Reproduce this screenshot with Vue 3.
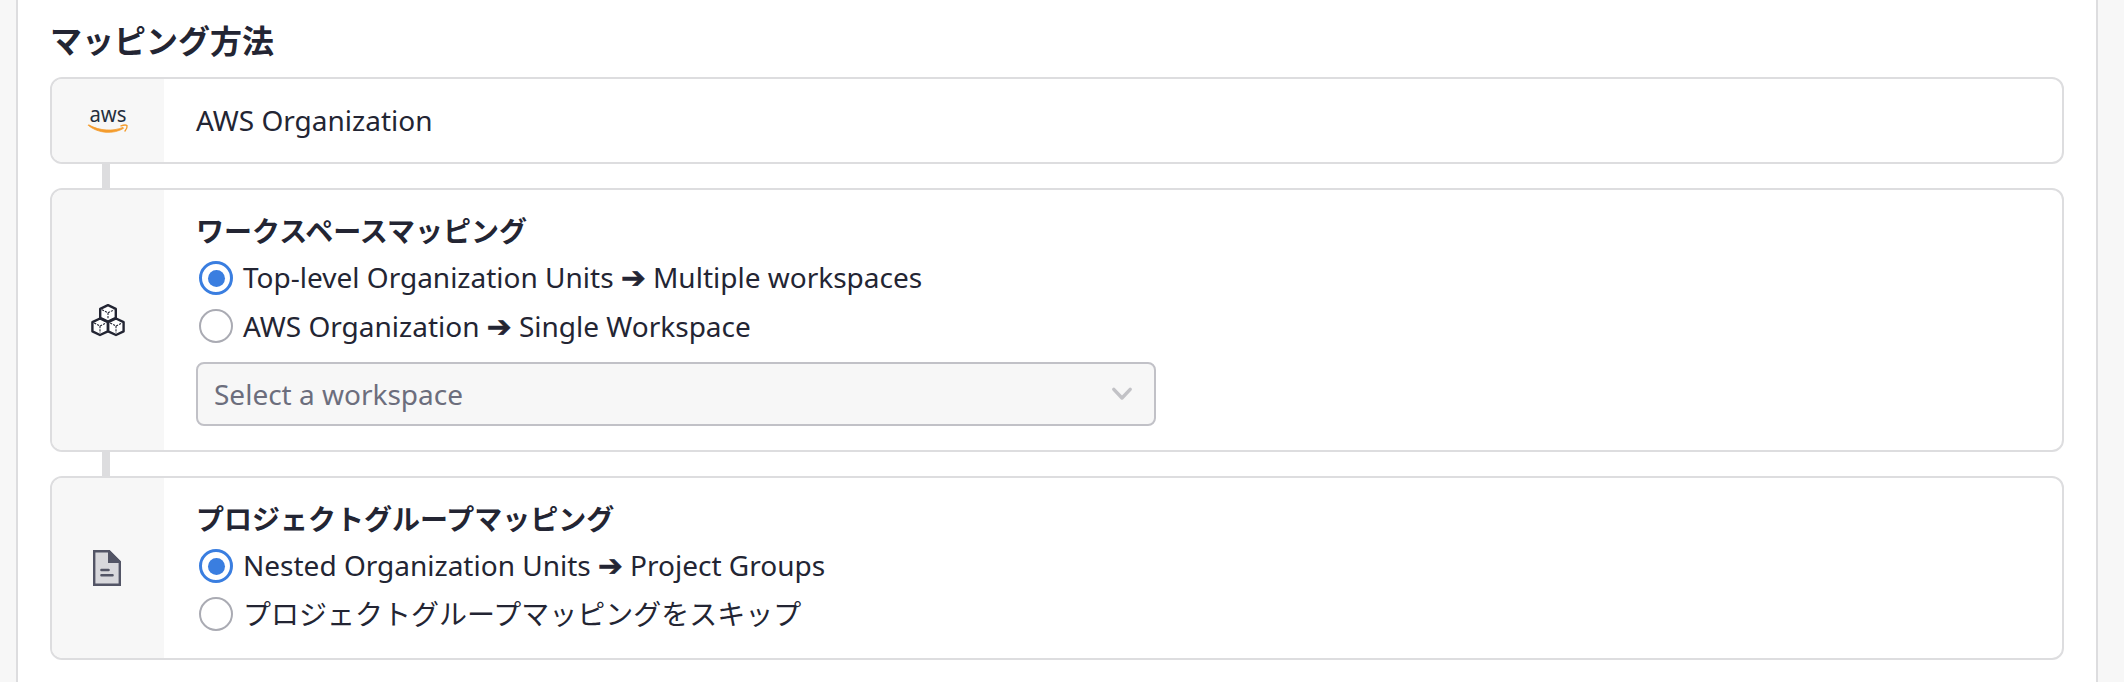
<script setup>
const workspaceOptions = [
  { before: 'Top-level Organization Units', after: 'Multiple workspaces', selected: true },
  { before: 'AWS Organization', after: 'Single Workspace', selected: false },
]
const projectOptions = [
  { before: 'Nested Organization Units', after: 'Project Groups', selected: true },
  { before: 'プロジェクトグループマッピングをスキップ', selected: false },
]
</script>

<template>
  <main class="page">
    <section class="panel">
      <h2 class="heading">マッピング方法</h2>

      <div class="card source">
        <div class="side">
          <svg class="aws" width="52" height="56" viewBox="-4 -12 52 56">
            <text x="3.4" y="16.8" textLength="37" lengthAdjust="spacingAndGlyphs">aws</text>
            <path d="M2.2 20.3C12 28.8 28 29.4 37.6 23.3L37 22.4C27 26.4 14 26.2 2.6 19.8Z" fill="#f49c2d" stroke="#f49c2d" stroke-width="0.8" stroke-linejoin="round" />
            <path d="M35 20.9C37.5 20 40 19.9 41 20.5C41.3 22 40.5 24.4 39 26" fill="none" stroke="#f49c2d" stroke-width="1.4" stroke-linecap="round" stroke-linejoin="round" />
          </svg>
        </div>
        <div class="body">AWS Organization</div>
      </div>

      <div class="connector"></div>

      <div class="card">
        <div class="side">
          <svg class="cubes" width="36" height="36" viewBox="0 0 36 36">
            <g fill="#fff" stroke="#232533" stroke-width="2.4" stroke-linejoin="round">
              <path d="M18 3.2L25.8 6.9V15.8L18 19.6L10.2 15.8V6.9Z" />
              <path d="M10 16.5L17.8 20.2V29.3L10 33L2.4 29.3V20.2Z" />
              <path d="M26 16.5L33.6 20.2V29.3L26 33L18.2 29.3V20.2Z" />
            </g>
            <g fill="none" stroke="#232533" stroke-width="1.1" stroke-dasharray="2.2 1.1">
              <path d="M12 7.8L18 10.8L24 7.8M18 10.8V17.5" />
              <path d="M4.2 21.1L10 24L15.8 21.1M10 24V31" />
              <path d="M20.2 21.1L26 24L31.8 21.1M26 24V31" />
            </g>
          </svg>
        </div>
        <div class="body">
          <h3 class="title">ワークスペースマッピング</h3>
          <div v-for="o in workspaceOptions" :key="o.before" class="option" :class="{ chosen: o.selected }">
            <span class="radio"></span>
            <span class="label">{{ o.before }}&#32;<span class="arrow">➔</span>&#32;{{ o.after }}</span>
          </div>
          <div class="select">
            <span>Select a workspace</span>
            <svg width="24" height="18" viewBox="0 0 24 18">
              <path d="M3.8 4.3L12 13L20.2 4.3" fill="none" stroke="#c2c2c6" stroke-width="3.4" stroke-linecap="round" stroke-linejoin="round" />
            </svg>
          </div>
        </div>
      </div>

      <div class="connector"></div>

      <div class="card">
        <div class="side">
          <svg class="doc" width="28" height="36" viewBox="0 0 28 36">
            <path d="M1.2 1.2H16L26.8 12V34.8H1.2Z" fill="#d8d8dc" stroke="#535566" stroke-width="2.4" />
            <path d="M15 0H16.5L28 11.5V13H15Z" fill="#535566" />
            <path d="M8.4 20H15.6M8.4 25.2H19.6" stroke="#535566" stroke-width="2.4" stroke-linecap="round" />
          </svg>
        </div>
        <div class="body">
          <h3 class="title">プロジェクトグループマッピング</h3>
          <div v-for="o in projectOptions" :key="o.before" class="option" :class="{ chosen: o.selected }">
            <span class="radio"></span>
            <span v-if="o.after" class="label">{{ o.before }}&#32;<span class="arrow">➔</span>&#32;{{ o.after }}</span>
            <span v-else class="label">{{ o.before }}</span>
          </div>
        </div>
      </div>
    </section>
  </main>
</template>

<style>
body {
  margin: 0;
  background: #f7f7f7;
}
</style>

<style scoped>
.page {
  box-sizing: border-box;
  height: 682px;
  padding: 0 26px 0 16px;
  overflow: hidden;
  background: #f7f7f7;
  color: #232533;
  font: 28px/40px "Noto Sans", "Noto Sans CJK JP", sans-serif;
}
.panel {
  box-sizing: border-box;
  height: 682px;
  padding: 17px 32px 0;
  border: solid #dddddf;
  border-width: 0 2px;
  background: #fff;
}
.heading {
  margin: 0 0 12px;
  font-size: 32px;
  line-height: 48px;
  font-weight: 700;
}
.card {
  box-sizing: border-box;
  display: flex;
  overflow: hidden;
  border: 2px solid #dddddf;
  border-radius: 12px;
}
.source {
  height: 87px;
}
.side {
  flex: none;
  display: flex;
  align-items: center;
  justify-content: center;
  width: 112px;
  background: #f7f7f7;
}
.body {
  flex: 1;
  padding: 21px 32px 24px;
}
.connector {
  width: 8px;
  height: 24px;
  margin-left: 52px;
  background: #dddddf;
}
.title {
  margin: 0 0 3px;
  font-size: 28px;
  line-height: 40px;
  font-weight: 700;
}
.option {
  display: flex;
  align-items: center;
  height: 48px;
  padding-left: 3px;
}
.option:last-child {
  margin-bottom: -4px;
}
.radio {
  box-sizing: border-box;
  flex: none;
  display: flex;
  width: 34px;
  height: 34px;
  margin-right: 10px;
  border: 2px solid #aaabb3;
  border-radius: 50%;
  background: #fff;
}
.chosen .radio {
  align-items: center;
  justify-content: center;
  border: 3px solid #3a7ee0;
}
.chosen .radio::after {
  content: "";
  width: 17px;
  height: 17px;
  border-radius: 50%;
  background: #3a7ee0;
}
.label {
  white-space: nowrap;
}
.chosen .label {
  padding-bottom: 2px;
}
.arrow {
  font-family: "DejaVu Sans", sans-serif;
  font-size: 29.6px;
  line-height: 1;
  -webkit-text-stroke: 0.6px #232533;
}
.select {
  box-sizing: border-box;
  display: flex;
  align-items: center;
  justify-content: space-between;
  width: 960px;
  height: 64px;
  margin-top: 12px;
  padding: 0 20px 0 16px;
  border: 2px solid #c1c1c7;
  border-radius: 8px;
  background: #f7f7f7;
  color: #6c6e7d;
}
.doc {
  margin-right: 2px;
}
.aws text {
  font: 21.5px "Noto Sans", sans-serif;
  fill: #252f3e;
}
</style>
